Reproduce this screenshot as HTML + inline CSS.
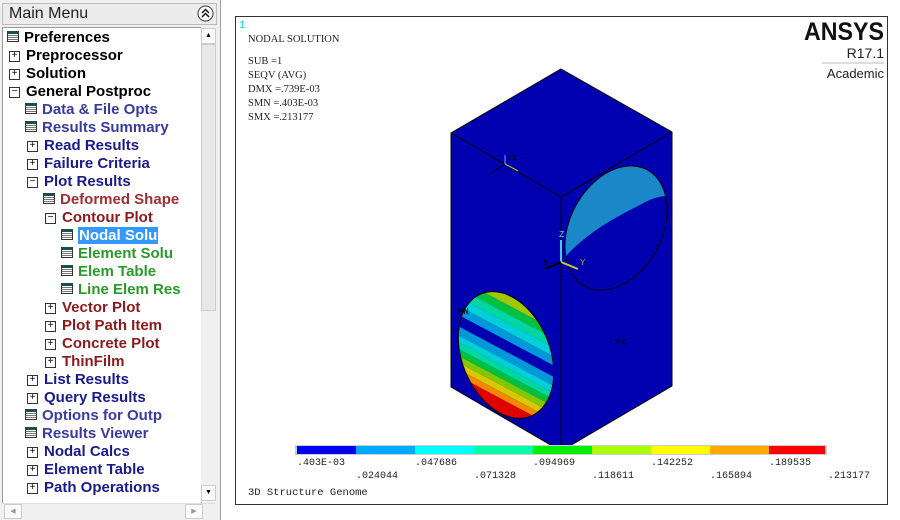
<!DOCTYPE html>
<html><head><style>
body{margin:0;width:900px;height:520px;background:#fff;overflow:hidden;font-family:"Liberation Sans",sans-serif;position:relative}
.side{position:absolute;left:0;top:0;width:220px;height:520px;background:#f0f0f0;border-right:1px solid #a0a0a0}
.hdr{position:absolute;left:2px;top:3px;width:213px;height:20px;background:#ececec;border:1px solid #bbb;font-size:16px;line-height:20px;color:#222}
.hdr span{margin-left:6px}
.coll{position:absolute;right:2px;top:1px;width:17px;height:17px}
.tree{position:absolute;left:2px;top:27px;width:198px;height:475px;background:#fff;border:1px solid #999;overflow:hidden}
.vs{position:absolute;left:201px;top:27px;width:14px;height:475px;background:#f0f0f0}
.hs{position:absolute;left:2px;top:503px;width:213px;height:14px;background:#f0f0f0;border-top:1px solid #ddd}
.r{position:absolute;font-weight:bold;font-size:15px;white-space:nowrap;height:18px;line-height:18px}
.pl{display:inline-block;width:9px;height:9px;border:1px solid #333;font-size:10px;line-height:8px;text-align:center;font-weight:normal;vertical-align:2px;margin-right:6px;color:#000;background:#fff}
.ic{display:inline-block;width:12px;height:11px;background:#fff;border:1px solid #333;box-sizing:border-box;border-top:3px solid #1a4f4f;vertical-align:0px;margin-right:5px;background-image:repeating-linear-gradient(#fff 0 1px,#777 1px 2px)}
.k{color:#000}.b{color:#1a1a8a}.bl{color:#3a3aa0}.red{color:#8b1a1a}.g{color:#2a9a2a}
.main{position:absolute;left:221px;top:0;width:679px;height:520px;background:#fff}
</style></head><body>
<div class="side">
<div class="hdr"><span>Main Menu</span><svg class="coll" viewBox="0 0 17 17"><circle cx="8.5" cy="8.5" r="7.5" fill="#fff" stroke="#333"/><path d="M5,8 L8.5,4.5 L12,8 M5,12 L8.5,8.5 L12,12" fill="none" stroke="#000" stroke-width="1.4"/></svg></div>
<div class="tree">
<div class="r k" style="left:4px;top:1px"><span class="ic"></span>Preferences</div>
<div class="r k" style="left:6px;top:19px"><span class="pl">+</span>Preprocessor</div>
<div class="r k" style="left:6px;top:37px"><span class="pl">+</span>Solution</div>
<div class="r k" style="left:6px;top:55px"><span class="pl">−</span>General Postproc</div>
<div class="r bl" style="left:22px;top:73px"><span class="ic"></span>Data &amp; File Opts</div>
<div class="r bl" style="left:22px;top:91px"><span class="ic"></span>Results Summary</div>
<div class="r b" style="left:24px;top:109px"><span class="pl">+</span>Read Results</div>
<div class="r b" style="left:24px;top:127px"><span class="pl">+</span>Failure Criteria</div>
<div class="r b" style="left:24px;top:145px"><span class="pl">−</span>Plot Results</div>
<div class="r red" style="left:40px;top:163px;color:#a03030"><span class="ic"></span>Deformed Shape</div>
<div class="r red" style="left:42px;top:181px"><span class="pl">−</span>Contour Plot</div>
<div class="r" style="left:58px;top:199px"><span class="ic"></span><span style="background:#3399ff;color:#fff;padding:0 1px">Nodal Solu</span></div>
<div class="r g" style="left:58px;top:217px"><span class="ic"></span>Element Solu</div>
<div class="r g" style="left:58px;top:235px"><span class="ic"></span>Elem Table</div>
<div class="r g" style="left:58px;top:253px"><span class="ic"></span>Line Elem Res</div>
<div class="r red" style="left:42px;top:271px"><span class="pl">+</span>Vector Plot</div>
<div class="r red" style="left:42px;top:289px"><span class="pl">+</span>Plot Path Item</div>
<div class="r red" style="left:42px;top:307px"><span class="pl">+</span>Concrete Plot</div>
<div class="r red" style="left:42px;top:325px"><span class="pl">+</span>ThinFilm</div>
<div class="r b" style="left:24px;top:343px"><span class="pl">+</span>List Results</div>
<div class="r b" style="left:24px;top:361px"><span class="pl">+</span>Query Results</div>
<div class="r bl" style="left:22px;top:379px"><span class="ic"></span>Options for Outp</div>
<div class="r bl" style="left:22px;top:397px"><span class="ic"></span>Results Viewer</div>
<div class="r b" style="left:24px;top:415px"><span class="pl">+</span>Nodal Calcs</div>
<div class="r b" style="left:24px;top:433px"><span class="pl">+</span>Element Table</div>
<div class="r b" style="left:24px;top:451px"><span class="pl">+</span>Path Operations</div>
</div>
<div class="vs">
<div style="position:absolute;left:0;top:1px;width:13px;height:14px;border:1px solid #ccc;background:#fafafa;font-size:7px;text-align:center;line-height:14px">▲</div>
<div style="position:absolute;left:0;top:17px;width:13px;height:265px;border:1px solid #ccc;background:#e8e8e8"></div>
<div style="position:absolute;left:0;top:458px;width:13px;height:14px;border:1px solid #ccc;background:#fafafa;font-size:7px;text-align:center;line-height:14px">▼</div>
</div>
<div class="hs">
<div style="position:absolute;left:2px;top:0;width:16px;height:13px;border:1px solid #ccc;background:#fafafa;font-size:7px;color:#999;text-align:center;line-height:13px">◀</div>
<div style="position:absolute;left:183px;top:0;width:16px;height:13px;border:1px solid #ccc;background:#fafafa;font-size:7px;color:#999;text-align:center;line-height:13px">▶</div>
</div>
</div>
<div class="main">
<svg width="679" height="520" viewBox="221 0 679 520" style="position:absolute;left:0;top:0" font-family="Liberation Mono, monospace">
<defs>
<clipPath id="c1"><ellipse cx="616" cy="228" rx="46" ry="66" transform="rotate(28 616 228)"/></clipPath>
<clipPath id="c2"><ellipse cx="506" cy="355" rx="44" ry="66" transform="rotate(-22 506 355)"/></clipPath>
</defs>
<rect x="235.5" y="16.5" width="652" height="488" fill="#fff" stroke="#333"/>
<text x="239" y="28" fill="#00e0e0" font-size="11">1</text>
<g font-size="10.5" fill="#222" font-family="Liberation Serif, serif">
<text x="248" y="42">NODAL SOLUTION</text>
<text x="248" y="64">SUB =1</text>
<text x="248" y="78">SEQV      (AVG)</text>
<text x="248" y="92">DMX =.739E-03</text>
<text x="248" y="106">SMN =.403E-03</text>
<text x="248" y="120">SMX =.213177</text>
</g>
<text x="884" y="40" text-anchor="end" font-family="Liberation Sans Narrow, Liberation Sans, sans-serif" font-size="25" font-weight="bold" fill="#111" textLength="80" lengthAdjust="spacingAndGlyphs">ANSYS</text>
<text x="884" y="58" text-anchor="end" font-family="Liberation Sans, sans-serif" font-size="14" fill="#222">R17.1</text>
<line x1="822" y1="63" x2="884" y2="63" stroke="#bbb"/>
<text x="884" y="78" text-anchor="end" font-family="Liberation Sans, sans-serif" font-size="13" fill="#222">Academic</text>
<polygon points="561,69 672,132 672,386 561,451 451,387 451,133" fill="#0000b0"/>
<g stroke="#000" stroke-width="1" fill="none">
<polyline points="451,133 561,197 672,132"/>
<line x1="561" y1="197" x2="561" y2="451"/>
<polygon points="561,69 672,132 672,386 561,451 451,387 451,133"/>
</g>
<g clip-path="url(#c1)">
<path d="M566,256 C590,230 620,215 640,205 C652,198 660,196 668,196 L670,150 L600,150 L560,200 Z" fill="#1a88c8"/>
</g>
<ellipse cx="616" cy="228" rx="46" ry="66" transform="rotate(28 616 228)" fill="none" stroke="#000"/>
<g clip-path="url(#c2)">
<g transform="rotate(28 506 355)">
<rect x="400" y="260" width="220" height="50" fill="#a0c800"/>
<rect x="400" y="310" width="220" height="8" fill="#00c040"/>
<rect x="400" y="318" width="220" height="8" fill="#00d8a0"/>
<rect x="400" y="326" width="220" height="8" fill="#00d0d8"/>
<rect x="400" y="334" width="220" height="8" fill="#0098d8"/>
<rect x="400" y="342" width="220" height="10" fill="#0000b0"/>
<rect x="400" y="352" width="220" height="8" fill="#0098d8"/>
<rect x="400" y="360" width="220" height="6" fill="#00d0d8"/>
<rect x="400" y="366" width="220" height="6" fill="#00d8a0"/>
<rect x="400" y="372" width="220" height="6" fill="#00c040"/>
<rect x="400" y="378" width="220" height="6" fill="#80c800"/>
<rect x="400" y="384" width="220" height="6" fill="#d8c800"/>
<rect x="400" y="390" width="220" height="6" fill="#f08800"/>
<rect x="400" y="396" width="220" height="60" fill="#e00000"/>
</g>
</g>
<ellipse cx="506" cy="355" rx="44" ry="66" transform="rotate(-22 506 355)" fill="none" stroke="#000"/>
<text x="458" y="314" font-size="9" fill="#000">MN</text>
<text x="615" y="345" font-size="9" fill="#000">MX</text>
<line x1="505" y1="164" x2="489" y2="174" stroke="#000"/>
<line x1="505" y1="164" x2="518" y2="171" stroke="#cccc40"/>
<line x1="505" y1="164" x2="505" y2="155" stroke="#5af"/>
<text x="507" y="160" font-size="8" fill="#000">11</text>
<line x1="561" y1="262" x2="561" y2="240" stroke="#4cf" stroke-width="2"/>
<line x1="561" y1="262" x2="578" y2="269" stroke="#cccc30" stroke-width="2"/>
<line x1="561" y1="262" x2="545" y2="269" stroke="#000" stroke-width="2"/>
<text x="559" y="237" font-size="9" fill="#4cf">Z</text>
<text x="580" y="265" font-size="9" fill="#aa3">Y</text>
<text x="543" y="266" font-size="9" fill="#000">X</text>
<rect x="295" y="445" width="532" height="10" fill="#ccc"/>
<g>
<rect x="297" y="446" width="59" height="8" fill="#0000ee"/>
<rect x="356" y="446" width="59" height="8" fill="#00aaff"/>
<rect x="415" y="446" width="59" height="8" fill="#00ffff"/>
<rect x="474" y="446" width="59" height="8" fill="#00ffaa"/>
<rect x="533" y="446" width="59" height="8" fill="#00ee00"/>
<rect x="592" y="446" width="59" height="8" fill="#aaff00"/>
<rect x="651" y="446" width="59" height="8" fill="#ffff00"/>
<rect x="710" y="446" width="59" height="8" fill="#ffaa00"/>
<rect x="769" y="446" width="56" height="8" fill="#ff0000"/>
</g>
<g font-size="10" fill="#222">
<text x="297" y="465">.403E-03</text>
<text x="415" y="465">.047686</text>
<text x="533" y="465">.094969</text>
<text x="651" y="465">.142252</text>
<text x="769" y="465">.189535</text>
<text x="356" y="478">.024044</text>
<text x="474" y="478">.071328</text>
<text x="592" y="478">.118611</text>
<text x="710" y="478">.165894</text>
<text x="828" y="478">.213177</text>
<text x="248" y="495" font-size="10.5">3D Structure Genome</text>
</g>
</svg>
</div>
</body></html>
